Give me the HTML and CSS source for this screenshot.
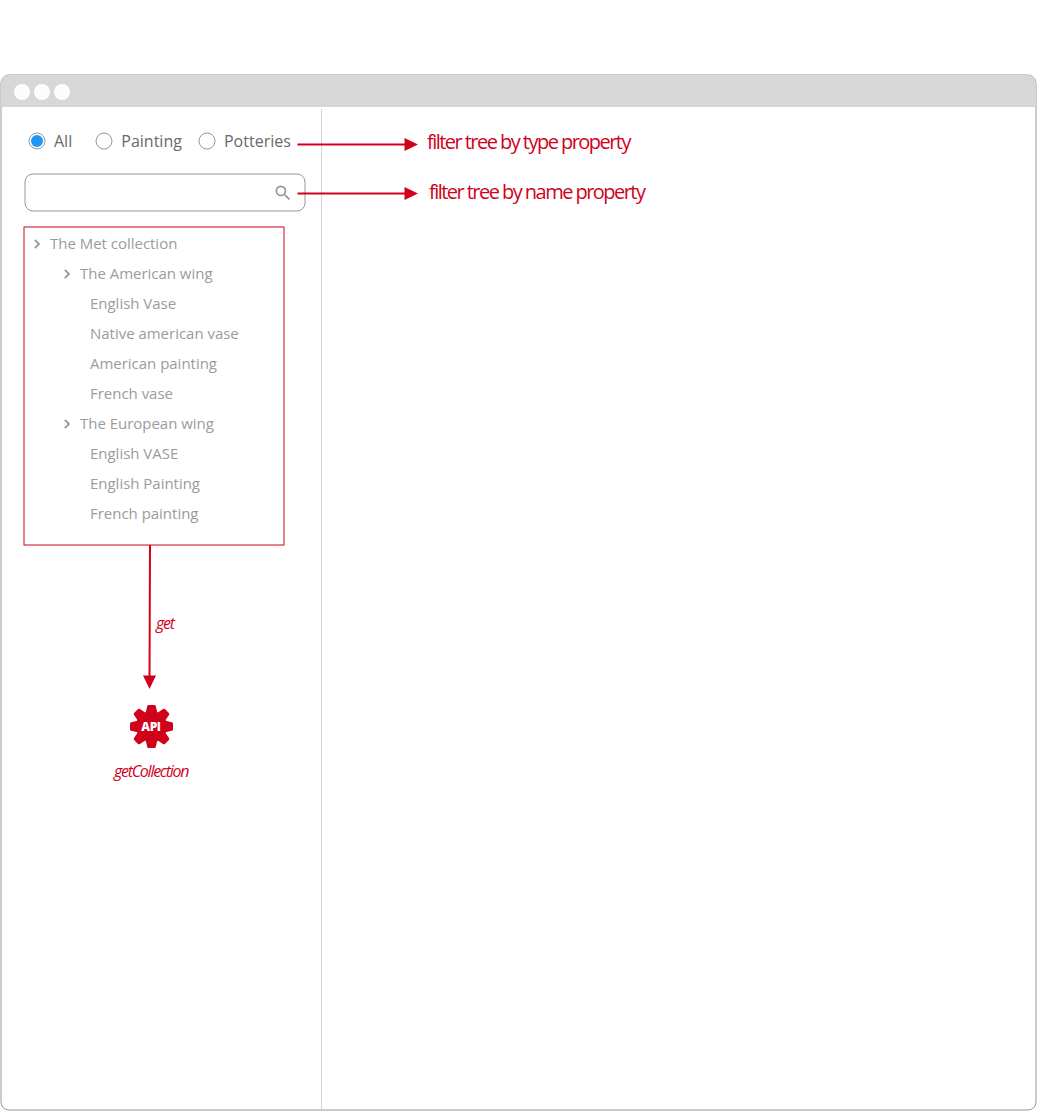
FILE: index.html
```html
<!DOCTYPE html>
<html lang="en">
<head>
<meta charset="utf-8">
<title>Collection browser wireframe</title>
<link rel="stylesheet" href="styles.css">
</head>
<body>
<main class="window">
  <header class="titlebar"><span class="dot"></span><span class="dot"></span><span class="dot"></span></header>
  <div class="content">
    <aside class="sidebar">
      <div class="filters">
        <label class="option all"><svg class="radio" viewBox="0 0 18 18"><circle cx="9" cy="9" r="8"/><circle class="checked" cx="9" cy="9" r="6"/></svg>All</label>
        <label class="option painting"><svg class="radio" viewBox="0 0 18 18"><circle cx="9" cy="9" r="8"/></svg>Painting</label>
        <label class="option potteries"><svg class="radio" viewBox="0 0 18 18"><circle cx="9" cy="9" r="8"/></svg>Potteries</label>
      </div>
      <div class="search">
        <svg class="outline" width="282" height="39"><rect x="1" y="1" width="280" height="37" rx="8"/></svg>
        <svg width="20" height="20" viewBox="0 0 24 24"><path fill="#979797" d="M15.5 14h-.79l-.28-.27A6.47 6.47 0 0 0 16 9.5 6.5 6.5 0 1 0 9.5 16c1.61 0 3.09-.59 4.23-1.57l.27.28v.79l5 4.99L20.49 19l-4.99-5zm-6 0C7.01 14 5 11.99 5 9.5S7.01 5 9.5 5 14 7.01 14 9.5 11.99 14 9.5 14z"/></svg>
      </div>
      <ul class="tree">
        <li class="node"><svg class="chevron" viewBox="0 0 6 10"><path d="M.8.8 5 5 .8 9.2"/></svg>The Met collection</li>
        <li class="node wing"><svg class="chevron" viewBox="0 0 6 10"><path d="M.8.8 5 5 .8 9.2"/></svg>The American wing</li>
        <li class="node leaf">English Vase</li>
        <li class="node leaf">Native american vase</li>
        <li class="node leaf">American painting</li>
        <li class="node leaf">French vase</li>
        <li class="node wing"><svg class="chevron" viewBox="0 0 6 10"><path d="M.8.8 5 5 .8 9.2"/></svg>The European wing</li>
        <li class="node leaf">English VASE</li>
        <li class="node leaf">English Painting</li>
        <li class="node leaf">French painting</li>
      </ul>
    </aside>
    <section class="detail"></section>
  </div>
</main>
<svg class="annotations" width="1037" height="1111" viewBox="0 0 1037 1111">
  <rect class="frame" x="1" y="75" width="1035" height="1035" rx="8"/>
  <rect class="scope" x="24" y="227" width="260" height="318"/>
  <g class="arrow">
    <path d="M297.5 144.5H406M297.5 193.5H406M150 545L149.500 677"/>
    <path class="head" d="M404.500 138L418 144.500L404.500 151ZM404.500 187L418 193.500L404.500 200ZM143 675.500H156L149.500 689Z"/>
  </g>
  <g transform="translate(151.500 726.500)">
    <circle r="15.500"/>
    <path id="tooth" d="M-5.800-14-4.300-20.300Q-4-21.500-3-21.500H3Q4-21.500 4.300-20.300L5.800-14Z"/>
    <path id="corner" d="M-5.500-14-4.200-20.500Q-3.900-21.800-2.800-21.800H2.800Q3.900-21.800 4.200-20.500L5.500-14Z" transform="rotate(45)"/>
    <use href="#tooth" transform="rotate(90)"/><use href="#corner" transform="rotate(90)"/><use href="#tooth" transform="rotate(180)"/><use href="#corner" transform="rotate(180)"/><use href="#tooth" transform="rotate(270)"/><use href="#corner" transform="rotate(270)"/>
    <text class="api" x="-.5" y="4.500">API</text>
  </g>
  <text class="note" x="427" y="149">filter tree by type property</text>
  <text class="note" x="429" y="199">filter tree by name property</text>
  <text class="call" x="156" y="629">get</text>
  <text class="call" x="114" y="777">getCollection</text>
</svg>
</body>
</html>
```
FILE: styles.css
```css
* { box-sizing: border-box; }
body { margin: 0; padding-top: 74px; height: 1111px; overflow: hidden; background: #fff; font-family: "Open Sans", sans-serif; }
.window { display: flex; flex-direction: column; height: 1037px; padding: 1px 2px 2px; border-radius: 9px; background: #fff; overflow: hidden; }
.titlebar { position: relative; z-index: 1; flex: none; display: flex; align-items: center; gap: 4px; height: 32px; margin: 0 -1px; padding: 2px 0 0 13px; background: #d7d7d7; border-radius: 8px 8px 0 0; }
.dot { width: 16px; height: 16px; border-radius: 50%; background: #fcfcfc; }
.content { flex: 1; display: flex; padding-top: 2px; }
.sidebar { width: 320px; border-right: 1px solid #d4d4d4; padding: 20px 0 0 22px; }
.filters { display: flex; height: 24px; padding-left: 4px; color: #696969; font-size: 16px; }
.option { display: flex; align-items: center; gap: 8px; flex: none; white-space: nowrap; }
.all { width: 67.300px; }
.painting { width: 102.700px; }
.radio { width: 18px; height: 18px; fill: #fff; stroke: #979797; }
.radio .checked { fill: #2196f3; stroke: none; }
.search { position: relative; display: flex; align-items: center; justify-content: flex-end; width: 282px; height: 39px; margin-top: 20px; padding-right: 13px; }
.outline { position: absolute; inset: 0; fill: none; stroke: #979797; }
.tree { list-style: none; width: 262px; height: 320px; margin: 14px 0 0 -1px; padding: 2px 0 0 11px; color: #9b9b9b; font-size: 15px; letter-spacing: -.02px; }
.node { display: flex; align-items: center; height: 30px; white-space: nowrap; }
.wing { padding-left: 30px; }
.leaf { padding-left: 56px; }
.chevron { width: 6px; height: 10px; margin: 2px 10px 0 0; fill: none; stroke: #979797; stroke-width: 1.8; }
.detail { flex: 1; }
.annotations { position: absolute; left: 0; top: 0; pointer-events: none; fill: #d0021b; }
.frame { fill: none; stroke: #979797; }
.scope { fill: none; stroke: #d0021b; }
.arrow { stroke: #d0021b; stroke-width: 2; }
.head { stroke: none; }
.api { fill: #fff; font-size: 12px; font-weight: 800; text-anchor: middle; letter-spacing: -.4px; }
.note { font-size: 20px; letter-spacing: -1.54px; }
.call { font-size: 16px; font-style: italic; letter-spacing: -1.27px; }
```
